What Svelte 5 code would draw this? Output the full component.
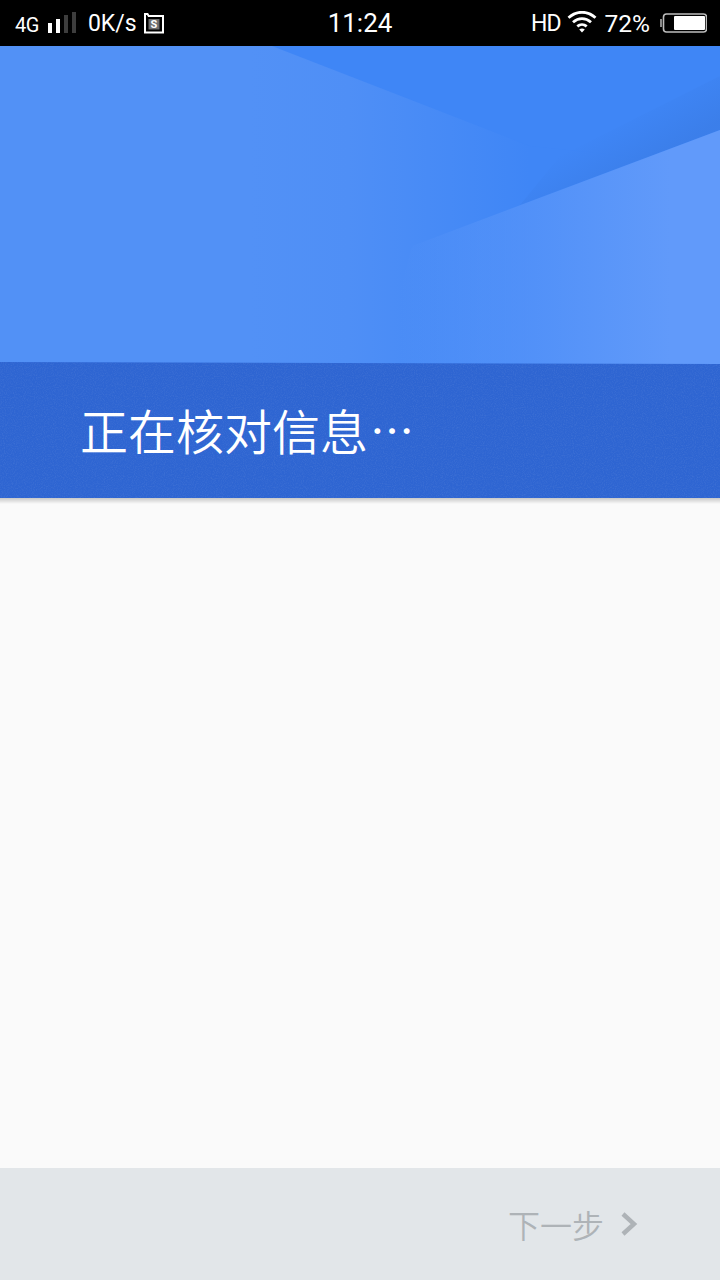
<script lang="ts">
  let title = '正在核对信息';
</script>

<div class="page">
  <header class="status">
    <div class="side">
      <span class="net">4G</span>
      <svg class="signal" width="28" height="22" viewBox="0 0 28 22">
        <rect x="0" y="11" width="4" height="10" fill="#fff" />
        <rect x="8" y="7" width="4" height="14" fill="#fff" />
        <rect x="16" y="3" width="4" height="18" fill="#3d3d3d" />
        <rect x="24" y="0" width="4" height="21" fill="#3d3d3d" />
      </svg>
      <span class="speed">0K/s</span>
      <svg class="sim" width="20" height="21" viewBox="0 0 20 21">
        <path d="M1 1h2.5l1.2 2h14.3v16.5h-18z" fill="none" stroke="#fff" stroke-width="2" />
        <rect x="4.5" y="6" width="11" height="10.5" fill="#6e6e6e" />
        <text x="10" y="15.2" text-anchor="middle" class="sim-s">S</text>
      </svg>
    </div>
    <div class="time">11:24</div>
    <div class="side right">
      <span class="hd">HD</span>
      <svg class="wifi" width="30" height="22" viewBox="0 0 29 22">
        <path d="M1 6.8C9 -0.6 20 -0.6 28 6.8" fill="none" stroke="#fff" stroke-width="2.8" />
        <path d="M5.5 11.3C11 6.4 18 6.4 23.5 11.3" fill="none" stroke="#fff" stroke-width="2.8" />
        <path d="M9.8 15.4C12.6 13 16.4 13 19.2 15.4" fill="none" stroke="#fff" stroke-width="2.8" />
        <path d="M11.7 18.6C13.4 17.2 15.6 17.2 17.3 18.6L14.5 21.6z" fill="#fff" />
      </svg>
      <span class="pct">72%</span>
      <svg class="battery" width="47" height="20" viewBox="0 0 47 20">
        <rect x="0" y="6" width="2" height="8" fill="#8a8a8a" />
        <rect x="3.5" y="1" width="43" height="18" rx="3" fill="none" stroke="#bdbdbd" stroke-width="1.6" />
        <rect x="14" y="3" width="31" height="14" rx="1" fill="#fff" />
      </svg>
    </div>
  </header>

  <section class="hero">
    <svg class="art" width="720" height="318" viewBox="0 0 720 318" preserveAspectRatio="none">
      <defs>
        <linearGradient id="base" gradientUnits="userSpaceOnUse" x1="250" y1="0" x2="530" y2="0">
          <stop offset="0" stop-color="#5291f6" />
          <stop offset="0.35" stop-color="#4f8ff6" />
          <stop offset="1" stop-color="#3f86f6" />
        </linearGradient>
        <linearGradient id="edgeShade" gradientUnits="userSpaceOnUse" x1="640" y1="60" x2="668" y2="106">
          <stop offset="0" stop-color="#3a7ce6" stop-opacity="0" />
          <stop offset="1" stop-color="#3a7ce6" stop-opacity="0.75" />
        </linearGradient>
        <linearGradient id="lowShape" gradientUnits="userSpaceOnUse" x1="400" y1="0" x2="670" y2="0">
          <stop offset="0" stop-color="#619afa" stop-opacity="0" />
          <stop offset="0.3" stop-color="#619afa" stop-opacity="0.38" />
          <stop offset="1" stop-color="#619afa" />
        </linearGradient>
      </defs>
      <rect width="720" height="318" fill="url(#base)" />
      <polygon points="272,0 720,0 720,120 530,100" fill="#3f86f6" />
      <polygon points="720,30 720,84 520,159 560,110" fill="url(#edgeShade)" />
      <polygon points="720,84 412,200 380,318 720,318" fill="url(#lowShape)" />
    </svg>
  </section>

  <section class="band">
    <svg class="grain" width="720" height="138" aria-hidden="true">
      <filter id="noise">
        <feTurbulence type="fractalNoise" baseFrequency="0.9" numOctaves="2" />
        <feColorMatrix values="0 0 0 0 1  0 0 0 0 1  0 0 0 0 1  0 0 0 1.4 -0.55" />
      </filter>
      <rect width="720" height="138" filter="url(#noise)" opacity="0.1" />
    </svg>
    <h1>{title}<span class="dots">…</span></h1>
  </section>

  <main class="body"></main>

  <footer class="foot">
    <span class="next">下一步</span>
    <svg class="chev" width="18" height="26" viewBox="0 0 18 26">
      <path d="M3 3l11 10L3 23" fill="none" stroke="#aeb3b7" stroke-width="4.4" />
    </svg>
  </footer>
</div>

<style>
  :global(body) {
    margin: 0;
    background: #fafafa;
  }

  .page {
    width: 720px;
    height: 1280px;
    display: flex;
    flex-direction: column;
    overflow: hidden;
    font-family: "Noto Sans CJK SC", "Noto Sans", sans-serif;
  }

  .status {
    height: 46px;
    flex: none;
    background: #000;
    color: #fff;
    display: grid;
    grid-template-columns: 1fr auto 1fr;
    align-items: center;
    padding: 0 13px 0 15px;
    box-sizing: border-box;
    font-family: Roboto, sans-serif;
  }

  .side {
    display: flex;
    align-items: center;
  }

  .side.right {
    justify-content: flex-end;
  }

  .net {
    font-size: 20px;
    letter-spacing: -0.5px;
    margin-top: 3px;
  }

  .signal {
    margin-left: 9px;
    margin-bottom: 1px;
  }

  .speed {
    font-size: 23px;
    margin-left: 12px;
  }

  .sim {
    margin-left: 7px;
    margin-top: 1px;
  }

  .sim-s {
    font-family: Roboto, sans-serif;
    font-size: 11px;
    font-weight: 700;
    fill: #fff;
  }

  .time {
    font-size: 26px;
    margin-right: 2px;
  }

  .hd {
    font-size: 23px;
    letter-spacing: -1px;
  }

  .wifi {
    margin-left: 6px;
    margin-bottom: 3px;
  }

  .pct {
    font-size: 24.5px;
    margin-left: 8px;
  }

  .battery {
    margin-left: 10px;
  }

  .hero {
    height: 316px;
    flex: none;
  }

  .art {
    display: block;
  }

  .band {
    position: relative;
    height: 136px;
    flex: none;
    background: #2e65d2;
    clip-path: polygon(0 0, 100% 2px, 100% 100%, 0 100%);
    display: flex;
    align-items: center;
    padding: 0 0 2px 80px;
    box-sizing: border-box;
  }

  .grain {
    position: absolute;
    inset: 0;
  }

  h1 {
    position: relative;
    margin: 0;
    color: #fff;
    font-size: 48px;
    font-weight: 350;
    line-height: 1;
    display: flex;
    align-items: center;
  }

  .dots {
    font-size: 44px;
    margin-left: 2px;
    font-weight: 400;
  }

  .body {
    flex: 1;
    background: linear-gradient(rgba(0, 0, 0, 0.2), rgba(0, 0, 0, 0) 6px), #fafafa;
  }

  .foot {
    height: 112px;
    flex: none;
    background: #e2e6e9;
    display: flex;
    align-items: center;
    justify-content: flex-end;
    padding-right: 82px;
    box-sizing: border-box;
  }

  .next {
    font-size: 32px;
    font-weight: 350;
    color: #aeb3b7;
  }

  .chev {
    margin-left: 16px;
  }
</style>
